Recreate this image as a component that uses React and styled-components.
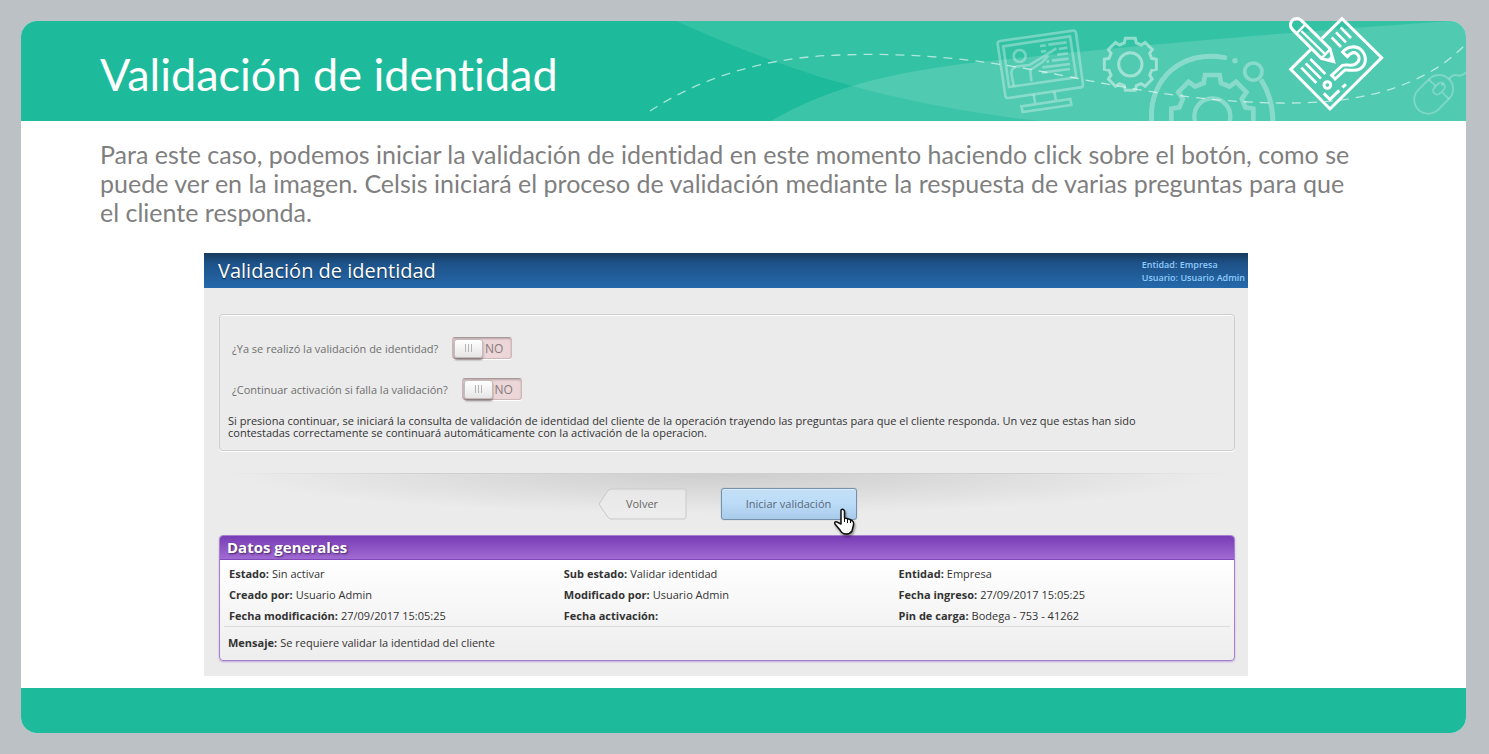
import React from "react";
import styled, { createGlobalStyle } from "styled-components";

const GlobalStyle = createGlobalStyle`
  *, *::before, *::after { box-sizing: border-box; }
  body { margin: 0; background: #bcc1c5; }
  p, h1, h2, dl, dd, fieldset { margin: 0; }
`;

const Page = styled.main`
  min-height: 100vh;
  display: flex;
  padding: 21px 23px 21px 21px;
  font-family: "Open Sans", "Noto Sans", sans-serif;
`;

const Slide = styled.article`
  flex: 1;
  min-width: 0;
  display: flex;
  flex-direction: column;
  background: #fff;
  border-radius: 16px;
`;

const SlideHeader = styled.header`
  position: relative;
  height: 100px;
  display: flex;
  align-items: center;
  padding: 6px 79px 0;
  background: #1dbb9b;
  border-radius: 16px 16px 0 0;
`;

const SlideTitle = styled.h1`
  font: 400 45px/56px Lato, "Noto Sans", sans-serif;
  font-variant-ligatures: none;
  color: #fff;
`;

const Art = styled.svg`
  position: absolute;
  top: 0;
  right: 0;
  width: 846px;
  height: 100px;
  overflow: visible;
  pointer-events: none;
`;

const SlideBody = styled.section`
  flex: 1;
  padding: 19px 79px 12px;
`;

const Intro = styled.p`
  font: 400 25px/29px Lato, "Noto Sans", sans-serif;
  font-variant-ligatures: none;
  color: #7f7f7f;
  white-space: nowrap;
`;

const SlideFooter = styled.footer`
  height: 45px;
  background: #1dbb9b;
  border-radius: 0 0 16px 16px;
`;

const AppPanel = styled.section`
  margin: 26px 139px 0 104px;
  background: #ebebeb;
`;

const AppBar = styled.div`
  height: 35px;
  display: flex;
  align-items: center;
  justify-content: space-between;
  padding: 0 3px 0 14px;
  background: linear-gradient(#163a5c, #1e5289 30%, #2569ab);
`;

const AppTitle = styled.h2`
  font-size: 20px;
  line-height: 28px;
  font-weight: 400;
  color: #fff;
  text-shadow: 0 1px 1px #0b2744;
`;

const Session = styled.p`
  font-size: 9px;
  font-weight: 600;
  line-height: 13px;
  color: #8fcbfa;
`;

const AppContent = styled.div`
  padding: 26px 13px 15px 15px;
`;

const Options = styled.fieldset`
  min-width: 0;
  padding: 22px 8px 11px;
  border: 1px solid #cfcfcf;
  border-radius: 4px;
  box-shadow: inset 0 1px 0 #fff, 0 1px 0 #fff;
`;

const OptionRow = styled.label`
  display: flex;
  align-items: center;
  gap: 14px;
  width: max-content;
  height: 22px;
  margin: 0 0 19px 4px;
  font-size: 11px;
  color: #707070;

  & + & { margin-bottom: 15px; }
`;

const Track = styled.span`
  position: relative;
  display: flex;
  align-items: center;
  width: 60px;
  height: 22px;
  padding: 0 8px 0 1px;
  justify-content: space-between;
  border: 1px solid #cdb9b9;
  border-top-color: #a99a9a;
  border-radius: 3px;
  background: #ecd6d8;
  box-shadow: inset 0 1px 2px #b9a5a7, 0 1px 0 #fff;
  font-size: 12px;
  color: #86797a;
`;

const Knob = styled.span`
  display: flex;
  align-items: center;
  justify-content: center;
  gap: 2px;
  width: 29px;
  height: 19px;
  border: 1px solid #c4bcbc;
  border-radius: 3px;
  background: linear-gradient(#fff, #e6e6e6);
  box-shadow: 0 2px 2px #8b7c7d;
`;

const Grip = styled.span`
  width: 1px;
  height: 8px;
  background: #b5b5b5;
`;

const ToggleInput = styled.input`
  position: absolute;
  inset: 0;
  width: 100%;
  height: 100%;
  margin: 0;
  opacity: 0;
`;

const Note = styled.p`
  font-size: 11px;
  line-height: 12px;
  color: #333;
`;

const Actions = styled.div`
  display: flex;
  justify-content: center;
  gap: 34px;
  height: 62px;
  margin-top: 22px;
  padding-top: 14px;
  border-top: 1px solid;
  border-image: linear-gradient(90deg, #ebebeb, #d0d0d0 20%, #d0d0d0 80%, #ebebeb) 1;
  background: radial-gradient(ellipse 48% 40px at 50% 0, #cdcdcd, #ebebeb);
`;

const BackButton = styled.button`
  position: relative;
  width: 89px;
  height: 32px;
  padding: 0;
  border: 0;
  background: none;
  font: 400 11px/16px "Open Sans", sans-serif;
  color: #666;
`;

const BackShape = styled.svg`
  position: absolute;
  inset: 0;
  width: 100%;
  height: 100%;
`;

const BackText = styled.span`
  position: relative;
`;

const StartButton = styled.button`
  position: relative;
  width: 136px;
  height: 32px;
  padding: 0;
  border: 1px solid #7490aa;
  border-radius: 3px;
  background: linear-gradient(#c3dff6, #bcdcf8 45%, #a9cbea);
  box-shadow: inset 0 1px 0 #d8ecfb, 0 0 1px #7490aa;
  font: 400 11px/16px "Open Sans", sans-serif;
  color: #59697a;
`;

const Cursor = styled.svg`
  position: absolute;
  right: 0;
  bottom: -18px;
  width: 24px;
  height: 30px;
  filter: drop-shadow(1px 2px 1px rgba(0, 0, 0, 0.4));
`;

const DataCard = styled.section`
  border: 1px solid #a57fce;
  border-radius: 4px;
  background: linear-gradient(#fff 20%, #ededed);
  box-shadow: 0 1px 2px #c3abd9;
`;

const DataTitle = styled.h2`
  height: 24px;
  padding-left: 7px;
  font-size: 15px;
  line-height: 22px;
  font-weight: 700;
  color: #fff;
  text-shadow: 1px 1px 2px #40215f;
  background: linear-gradient(#783cb5, #a06bd2);
  border-bottom: 1px solid #8148bb;
  border-radius: 3px 3px 0 0;
`;

const DataGrid = styled.dl`
  display: grid;
  grid-template-columns: 1fr 1fr 0.99fr;
  margin: 0 4px;
  padding: 3px 0 0 5px;
  border-bottom: 1px solid #dcdcdc;
`;

const DataItem = styled.div`
  display: flex;
  gap: 3px;
  font-size: 11px;
  line-height: 21px;
  color: #333;
`;

const Term = styled.dt`
  font-weight: 700;
`;

const Message = styled.dl`
  padding: 5px 8px 7px;
`;

function gearPath(cx, cy, outer, root, half, lean) {
  const points = [];
  for (let i = 0; i < 8; i += 1) {
    const a = (i * Math.PI) / 4;
    [[-half - lean, root], [-half, outer], [half, outer], [half + lean, root]].forEach(([t, r]) => {
      const x = cx + t * Math.cos(a) + r * Math.sin(a);
      const y = cy + t * Math.sin(a) - r * Math.cos(a);
      points.push(`${x.toFixed(1)} ${y.toFixed(1)}`);
    });
  }
  return `M${points.join("L")}Z`;
}

function HeaderArt() {
  return (
    <Art viewBox="620 21 846 100" fill="none" aria-hidden="true">
      <clipPath id="band">
        <path d="M620 21H1450a16 16 0 0 1 16 16V121H620Z" />
      </clipPath>
      <g clipPath="url(#band)">
        <path d="M676 21C740 50 800 72 852 86C910 102 975 114 1040 121H1466V21Z" fill="#fff" fillOpacity=".1" />
        <path d="M771 121C795 107 820 96 852 86C900 72 945 65 1000 60C1100 49 1250 35 1450 21H1466V121Z" fill="#fff" fillOpacity=".14" />
        <path
          d="M650 111C700 78 765 57 840 55C920 52 990 61 1055 74C1130 89 1200 102 1280 103C1360 104 1405 88 1440 66Q1454 56 1466 44"
          stroke="#fff" strokeOpacity=".6" strokeWidth="1.3" strokeDasharray="9 7"
        />
        <g transform="translate(980 10) scale(.33333)" stroke="#fff" strokeOpacity=".32" strokeWidth="8">
          <path d="M60 93L279 62Q287 61 288 69L309 223Q310 231 302 232L86 264Q77 265 76 257L53 102Q52 94 60 93Z" />
          <path d="M70 109L270 79L289 202L87 231Z" />
          <path d="M161 254L166 282M223 245L228 273M124 289L271 267L274 285L128 306Z" />
          <circle cx="119" cy="138" r="18" />
          <path d="M101 227L94 190Q94 172 112 169L149 165L185 143L229 115M154 214L151 180L187 156L205 137" />
          <path d="M180 108L197 106M205 104L260 97M183 125L199 123M236 117L262 113M232 134L264 130M199 155L207 154M216 152L266 146M187 172L270 162M185 188L270 177" />
          <path d={gearPath(451, 163, 78, 64, 15, 3)} strokeOpacity=".45" strokeWidth="9" />
          <circle cx="451" cy="163" r="35" strokeOpacity=".45" strokeWidth="9" />
          <path d={gearPath(697, 318, 123, 99, 22, 4)} strokeWidth="14" />
          <circle cx="697" cy="319" r="54" strokeWidth="13" />
          <path d="M515 333C505 205 610 118 734 143" strokeWidth="15" strokeLinecap="round" />
          <path d="M843 209Q878 262 879 340" strokeWidth="15" />
          <circle cx="820" cy="185" r="26" strokeWidth="11" />
          <circle cx="765" cy="152" r="8" fill="#fff" fillOpacity=".32" stroke="none" />
        </g>
        <g transform="translate(1260 5) scale(.33333)" stroke="#fff" strokeOpacity=".25" strokeWidth="6">
          <rect x="-42" y="-65" width="84" height="130" rx="42" transform="translate(521 268) rotate(45)" />
          <rect x="-12" y="-20" width="24" height="40" rx="12" transform="translate(537 251) rotate(45)" />
          <path d="M506 224L527 242M547 262L566 282M544 242L551 235M567 222Q580 206 592 211Q606 215 620 201" />
        </g>
      </g>
      <g transform="translate(1260 5) scale(.33333)" stroke="#fff" strokeWidth="9">
        <path d="M155 131L92 193L210 312L365 158L246 41L186 100" />
        <path d="M97 73A19 19 0 0 1 124 46L210 131L221 170L184 160Z" />
        <path d="M111 84L135 59" strokeWidth="7" />
        <path d="M124 78L196 148M184 160L210 133" strokeWidth="7" />
        <path d="M207 165L216 156" />
        <path d="M215 97L243 126M228 82L258 112M242 67L273 99" strokeWidth="8" />
        <path d="M124 188L169 234M137 175L183 221M151 162L196 207" strokeWidth="8" />
        <path d="M248 141C261 124 290 119 306 137C322 156 318 181 301 191C287 200 270 194 255 195L225 222L215 211L247 181C260 177 271 184 285 178C301 170 300 154 290 146C281 139 270 146 262 155Z" />
        <circle cx="202" cy="240" r="10" />
        <path d="M191 265L210 283L238 256M247 247L258 238" />
      </g>
    </Art>
  );
}

function Toggle({ label }) {
  return (
    <OptionRow>
      {label}
      <Track>
        <Knob><Grip /><Grip /><Grip /></Knob>
        NO
        <ToggleInput type="checkbox" />
      </Track>
    </OptionRow>
  );
}

const data = [
  ["Estado:", "Sin activar"],
  ["Sub estado:", "Validar identidad"],
  ["Entidad:", "Empresa"],
  ["Creado por:", "Usuario Admin"],
  ["Modificado por:", "Usuario Admin"],
  ["Fecha ingreso:", "27/09/2017 15:05:25"],
  ["Fecha modificación:", "27/09/2017 15:05:25"],
  ["Fecha activación:", ""],
  ["Pin de carga:", "Bodega - 753 - 41262"],
];

export default function App() {
  return (
    <>
      <GlobalStyle />
      <Page>
        <Slide>
          <SlideHeader>
            <SlideTitle>Validación de identidad</SlideTitle>
            <HeaderArt />
          </SlideHeader>
          <SlideBody>
            <Intro>
              Para este caso, podemos iniciar la validación de identidad en este momento haciendo click sobre el botón, como se<br />
              puede ver en la imagen. Celsis iniciará el proceso de validación mediante la respuesta de varias preguntas para que<br />
              el cliente responda.
            </Intro>
            <AppPanel>
              <AppBar>
                <AppTitle>Validación de identidad</AppTitle>
                <Session>Entidad: Empresa<br />Usuario: Usuario Admin</Session>
              </AppBar>
              <AppContent>
                <Options>
                  <Toggle label="¿Ya se realizó la validación de identidad?" />
                  <Toggle label="¿Continuar activación si falla la validación?" />
                  <Note>
                    Si presiona continuar, se iniciará la consulta de validación de identidad del cliente de la operación trayendo las preguntas para que el cliente responda. Un vez que estas han sido<br />
                    contestadas correctamente se continuará automáticamente con la activación de la operacion.
                  </Note>
                </Options>
                <Actions>
                  <BackButton type="button">
                    <BackShape viewBox="0 0 89 32" fill="#ececec" fillOpacity=".7" stroke="#c9c9c9" aria-hidden="true">
                      <path d="M13 1H86Q88 1 88 3V29Q88 31 86 31H13Q11 31 9 28L1 16L9 4Q11 1 13 1Z" />
                    </BackShape>
                    <BackText>Volver</BackText>
                  </BackButton>
                  <StartButton type="button">
                    Iniciar validación
                    <Cursor viewBox="0 0 24 30" aria-hidden="true">
                      <path d="M9 3Q11 1 12.500 4V11L15 11.500L18 12.500L20.500 14Q22 15 21.500 18L20 24Q18 27 14 27Q10 27 8 23L3 17Q2 14 5 15L9 17Z" fill="#fff" stroke="#111" strokeWidth="1.5" strokeLinejoin="round" />
                      <path d="M12.500 11V15M15.500 12V16M18.500 13V16" stroke="#111" />
                    </Cursor>
                  </StartButton>
                </Actions>
                <DataCard>
                  <DataTitle>Datos generales</DataTitle>
                  <DataGrid>
                    {data.map(([term, value]) => (
                      <DataItem key={term}><Term>{term}</Term><dd>{value}</dd></DataItem>
                    ))}
                  </DataGrid>
                  <Message>
                    <DataItem><Term>Mensaje:</Term><dd>Se requiere validar la identidad del cliente</dd></DataItem>
                  </Message>
                </DataCard>
              </AppContent>
            </AppPanel>
          </SlideBody>
          <SlideFooter />
        </Slide>
      </Page>
    </>
  );
}
